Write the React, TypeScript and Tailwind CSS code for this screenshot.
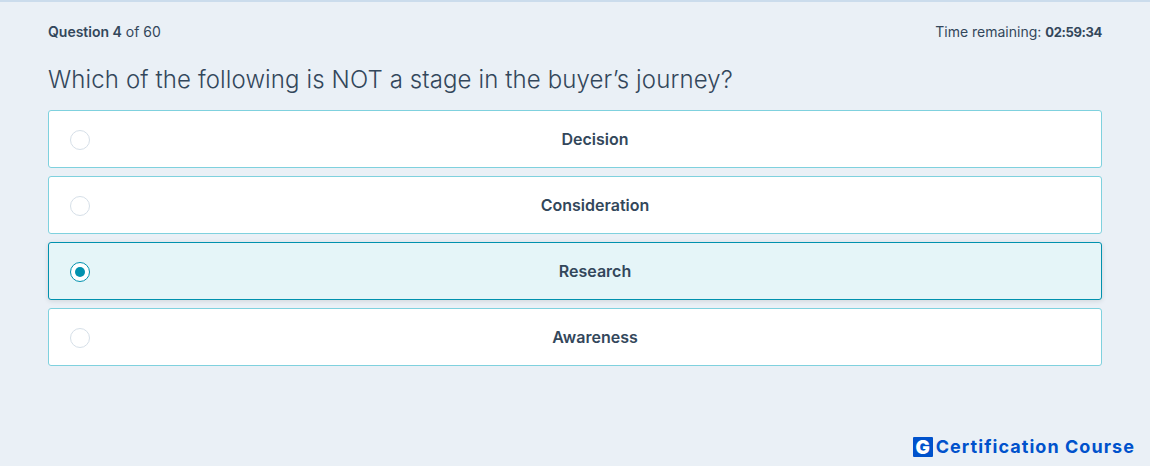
const options = [
  { label: 'Decision', selected: false },
  { label: 'Consideration', selected: false },
  { label: 'Research', selected: true },
  { label: 'Awareness', selected: false },
]

function Option({ label, selected }: { label: string; selected: boolean }) {
  return (
    <div
      className={
        selected
          ? 'relative flex h-[58px] items-center justify-center rounded-[3px] border border-[#0091ae] bg-[#e5f5f8] pl-10 shadow-[0_1px_5px_rgba(0,0,0,0.12)]'
          : 'relative flex h-[58px] items-center justify-center rounded-[3px] border border-[#7fd1de] bg-white pl-10'
      }
    >
      {selected ? (
        <span className="absolute left-[21px] top-[19px] flex h-5 w-5 items-center justify-center rounded-full border border-[#0091ae] bg-white">
          <span className="h-[10px] w-[10px] rounded-full bg-[#0091ae]" />
        </span>
      ) : (
        <span className="absolute left-[21px] top-[19px] h-5 w-5 rounded-full border border-[#d6dfe8] bg-white" />
      )}
      <span className="text-[16px] font-semibold text-[#33475b]">{label}</span>
    </div>
  )
}

export default function App() {
  return (
    <div className="relative h-[466px] overflow-hidden border-t-2 border-[#cbdcec] bg-[#eaf0f6] px-12 font-['Inter','Noto_Sans',sans-serif] text-[#33475b]">
      <div className="flex h-[60px] items-center justify-between pb-0.5 text-[14px]">
        <p>
          <span className="font-semibold">Question 4</span> of 60
        </p>
        <p className="pt-px">
          Time remaining: <span className="text-[13px] font-bold tracking-[-0.35px]">02:59:34</span>
        </p>
      </div>
      <h1 className="mb-3 flex h-9 items-center text-[24px] font-light leading-9 tracking-[0.115px]">
        Which of the following is NOT a stage in the buyer’s journey?
      </h1>
      <div className="flex flex-col gap-2">
        {options.map((o) => (
          <Option key={o.label} label={o.label} selected={o.selected} />
        ))}
      </div>
      <div className="absolute bottom-[9px] right-[15px] flex items-center gap-[3px] text-[#0052cc]">
        <span className="flex h-5 w-5 items-center justify-center rounded-[1px] bg-[#0052cc] text-[19px] font-black leading-none text-white">
          G
        </span>
        <span className="text-[18px] font-bold leading-5 tracking-[1.05px]">
          Certification Course
        </span>
      </div>
    </div>
  )
}
